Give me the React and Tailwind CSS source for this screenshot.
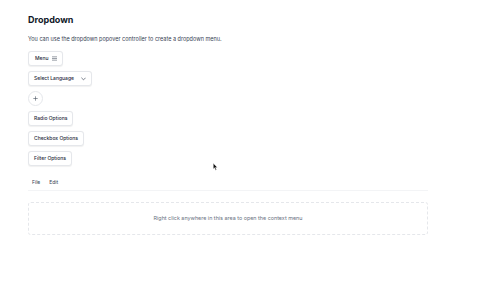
const btn =
  "flex h-[15px] shrink-0 items-center whitespace-nowrap rounded-[3px] border border-gray-200 bg-white px-[5px] text-[5px] font-medium leading-none text-gray-800 shadow-[0_0.5px_1px_rgba(0,0,0,0.06)]";

const MenuIcon = () => (
  <svg width="5" height="5" viewBox="0 0 6 5" className="ml-[3px] shrink-0">
    <path d="M0 0.5h6M0 2.5h6M0 4.5h6" stroke="#374151" strokeWidth="0.6" />
  </svg>
);

const Chevron = () => (
  <svg width="5" height="4" viewBox="0 0 6 4" className="ml-[7px] shrink-0">
    <path d="M0.8 0.8L3 3L5.2 0.8" fill="none" stroke="#374151" strokeWidth="0.8" strokeLinecap="round" strokeLinejoin="round" />
  </svg>
);

const Plus = () => (
  <svg width="5" height="5" viewBox="0 0 5 5">
    <path d="M2.5 0.3v4.4M0.3 2.5h4.4" stroke="#4b5563" strokeWidth="0.6" />
  </svg>
);

const Cursor = () => (
  <svg width="5" height="8" viewBox="0 0 5 8" className="absolute left-[213px] top-[163px]">
    <path d="M0.3 0.3L0.3 6L1.6 4.8L2.6 7.2L3.5 6.8L2.5 4.5L4.3 4.4Z" fill="#111" stroke="#fff" strokeWidth="0.4" />
  </svg>
);

export default function App() {
  return (
    <div
      className="relative h-[308px] w-[480px] bg-white pl-[28px] pt-[13px]"
      style={{ fontFamily: "Inter, 'Noto Sans', sans-serif" }}
    >
      {/* Heading */}
      <h1 className="h-[14px] text-[9px] font-bold leading-[14px] text-gray-900">Dropdown</h1>
      <p className="mt-[8px] h-[9px] whitespace-nowrap text-[5.5px] leading-[9px] text-gray-700">
        You can use the dropdown popover controller to create a dropdown menu.
      </p>

      {/* Buttons */}
      <div className="mt-[7px] flex flex-col items-start gap-[5px]">
        <button className={`${btn} pl-[6px]`}>
          Menu
          <MenuIcon />
        </button>
        <button className={btn}>
          Select Language
          <Chevron />
        </button>
        <button className="flex h-[15px] w-[15px] items-center justify-center rounded-full border border-gray-200 bg-white">
          <Plus />
        </button>
        <button className={btn}>Radio Options</button>
        <button className={btn}>Checkbox Options</button>
        <button className={btn}>Filter Options</button>
      </div>

      {/* Menubar */}
      <div className="mt-[9px] flex h-[16px] w-[400px] items-center gap-[9px] border-b border-gray-100 pl-[4px] text-[5px] leading-none text-gray-700">
        <span>File</span>
        <span>Edit</span>
      </div>

      {/* Context area */}
      <div className="mt-[11px] flex h-[33px] w-[400px] items-center justify-center rounded-[3px] border border-dashed border-gray-200 text-[5.4px] leading-none text-gray-500">
        Right click anywhere in this area to open the context menu
      </div>

      <Cursor />
    </div>
  );
}
